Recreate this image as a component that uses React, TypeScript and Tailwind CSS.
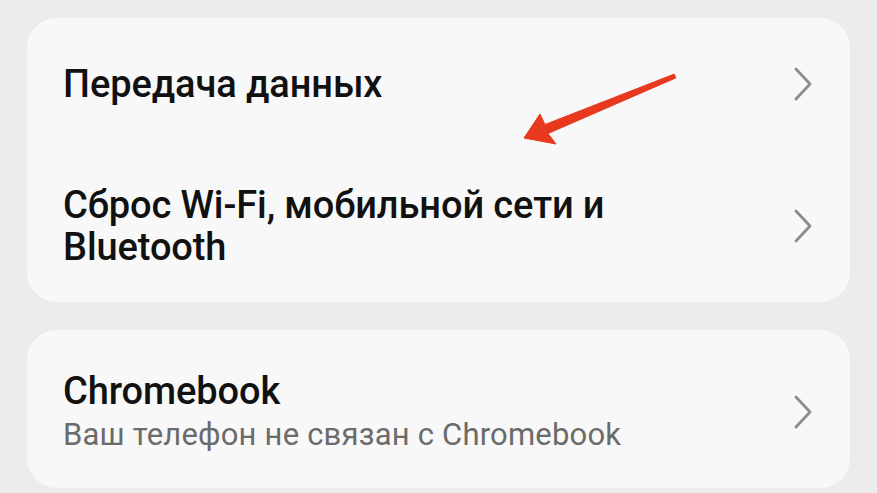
function Chevron() {
  return (
    <svg width="22" height="36" viewBox="0 0 22 36" className="shrink-0" fill="none">
      <polyline points="4,3 18,18 4,33" stroke="#8c8c8c" strokeWidth="2.8" strokeLinecap="round" strokeLinejoin="round" />
    </svg>
  )
}

function Row({ title, subtitle, className }: { title: React.ReactNode; subtitle?: string; className?: string }) {
  return (
    <div className={`flex items-center justify-between pl-[36px] pr-[36px] ${className ?? ''}`}>
      <div className="flex flex-col">
        <span className="text-[38px] leading-[42px] font-medium text-[#111] tracking-[-0.1px]">{title}</span>
        {subtitle && (
          <span className="text-[31px] leading-[40px] text-[#6b6b6b] mt-[3px] tracking-[0.2px]">{subtitle}</span>
        )}
      </div>
      <Chevron />
    </div>
  )
}

export default function App() {
  return (
    <div
      className="w-full h-[493px] overflow-hidden bg-[#ececec] px-[27px] pt-[18px] flex flex-col gap-[28px]"
      style={{ fontFamily: 'Roboto, "Noto Sans", sans-serif' }}
    >
      <div className="relative rounded-[30px] bg-[#f8f8f8] flex flex-col">
        <Row title="Передача данных" className="h-[132px]" />
        <Row
          title={
            <>
              Сброс Wi-Fi, мобильной сети и
              <br />
              Bluetooth
            </>
          }
          className="h-[152px]"
        />
        {/* red pointer arrow */}
        <svg className="absolute left-[468px] top-[32px]" width="190" height="100" viewBox="0 0 190 100">
          <polygon
            points="179.2,24.1 50,74.5 45,64 29,88 61,94 53,83.5 180.8,27.9"
            fill="#e8391f"
            stroke="#e8391f"
            strokeWidth="1"
            strokeLinejoin="round"
          />
        </svg>
      </div>
      <div className="rounded-[30px] bg-[#f8f8f8]">
        <Row title="Chromebook" subtitle="Ваш телефон не связан с Chromebook" className="h-[158px] pt-[6px]" />
      </div>
    </div>
  )
}
